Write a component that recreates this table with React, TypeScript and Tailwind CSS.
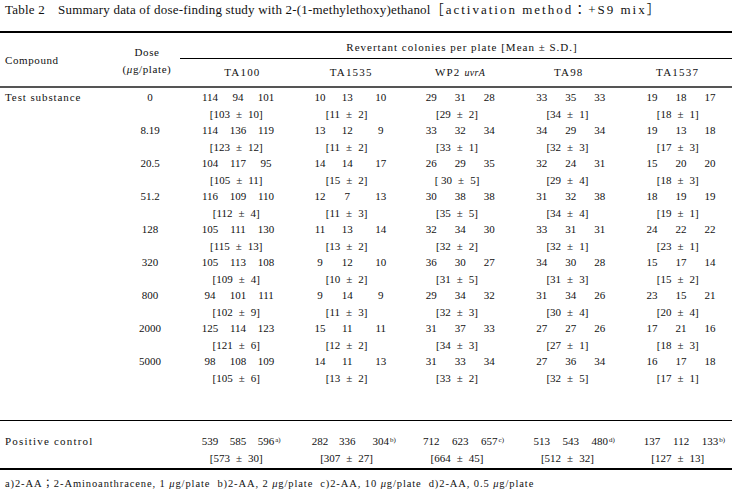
import React from 'react';

type Cell = { v: string[]; sup?: string; mean: string };

const doses = ['0', '8.19', '20.5', '51.2', '128', '320', '800', '2000', '5000'];

const strains = ['TA100', 'TA1535', 'WP2', 'TA98', 'TA1537'];

// widths of the three number slots per strain column
const slotWidths = [
  ['w-[28px]', 'w-[28px]', 'w-[28px]'],
  ['w-[30px]', 'w-[30px]', 'w-[44px]'],
  ['w-[29px]', 'w-[29px]', 'w-[29px]'],
  ['w-[29px]', 'w-[29px]', 'w-[29px]'],
  ['w-[29px]', 'w-[29px]', 'w-[29px]'],
];

const c = (a: string, b: string, d: string, mean: string, sup?: string): Cell => ({ v: [a, b, d], mean, sup });

const rows: Cell[][] = [
  [c('114', '94', '101', '[103 ± 10]'), c('10', '13', '10', '[11 ± 2]'), c('29', '31', '28', '[29 ± 2]'), c('33', '35', '33', '[34 ± 1]'), c('19', '18', '17', '[18 ± 1]')],
  [c('114', '136', '119', '[123 ± 12]'), c('13', '12', '9', '[11 ± 2]'), c('33', '32', '34', '[33 ± 1]'), c('34', '29', '34', '[32 ± 3]'), c('19', '13', '18', '[17 ± 3]')],
  [c('104', '117', '95', '[105 ± 11]'), c('14', '14', '17', '[15 ± 2]'), c('26', '29', '35', '[ 30 ± 5]'), c('32', '24', '31', '[29 ± 4]'), c('15', '20', '20', '[18 ± 3]')],
  [c('116', '109', '110', '[112 ± 4]'), c('12', '7', '13', '[11 ± 3]'), c('30', '38', '38', '[35 ± 5]'), c('31', '32', '38', '[34 ± 4]'), c('18', '19', '19', '[19 ± 1]')],
  [c('105', '111', '130', '[115 ± 13]'), c('11', '13', '14', '[13 ± 2]'), c('32', '34', '30', '[32 ± 2]'), c('33', '31', '31', '[32 ± 1]'), c('24', '22', '22', '[23 ± 1]')],
  [c('105', '113', '108', '[109 ± 4]'), c('9', '12', '10', '[10 ± 2]'), c('36', '30', '27', '[31 ± 5]'), c('34', '30', '28', '[31 ± 3]'), c('15', '17', '14', '[15 ± 2]')],
  [c('94', '101', '111', '[102 ± 9]'), c('9', '14', '9', '[11 ± 3]'), c('29', '34', '32', '[32 ± 3]'), c('31', '34', '26', '[30 ± 4]'), c('23', '15', '21', '[20 ± 4]')],
  [c('125', '114', '123', '[121 ± 6]'), c('15', '11', '11', '[12 ± 2]'), c('31', '37', '33', '[34 ± 3]'), c('27', '27', '26', '[27 ± 1]'), c('17', '21', '16', '[18 ± 3]')],
  [c('98', '108', '109', '[105 ± 6]'), c('14', '11', '13', '[13 ± 2]'), c('31', '33', '34', '[33 ± 2]'), c('27', '36', '34', '[32 ± 5]'), c('16', '17', '18', '[17 ± 1]')],
];

const positive: Cell[] = [
  c('539', '585', '596', '[573 ± 30]', 'a)'),
  c('282', '336', '304', '[307 ± 27]', 'b)'),
  c('712', '623', '657', '[664 ± 45]', 'c)'),
  c('513', '543', '480', '[512 ± 32]', 'd)'),
  c('137', '112', '133', '[127 ± 13]', 'b)'),
];

const StrainCell = ({ cell, col }: { cell: Cell; col: number }) => {
  const [l, r] = cell.mean.slice(1, -1).split('±');
  return (
    <div className="flex flex-col">
      <div className="flex pl-[16px]">
        {cell.v.map((n, i) => (
          <span key={i} className={`${slotWidths[col][i]} text-center`}>
            <span className="relative">
              {n}
              {i === 2 && cell.sup && (
                <span className="absolute left-full top-[-3px] ml-[1px] text-[7px]">{cell.sup}</span>
              )}
            </span>
          </span>
        ))}
      </div>
      <div className="whitespace-pre text-center pl-[2px]">
        [{l.replace(/ $/, '')}
        <span className="mx-[6px]">±</span>
        {r.trim()}]
      </div>
    </div>
  );
};

const grid = 'grid grid-cols-[120px_60px_repeat(5,minmax(0,1fr))]';

export default function App() {
  return (
    <div className="w-[732px] h-[493px] bg-white text-[#111] [font-family:'Liberation_Serif','Noto_Sans_CJK_JP',serif] text-[11px] leading-[16.5px] overflow-hidden">
      <div className="px-[5px] pt-[2px] text-[13px] leading-[16px] whitespace-nowrap tracking-[0.2px]">
        Table 2　Summary data of dose-finding study with 2-(1-methylethoxy)ethanol
        <span className="tracking-[2px]">［activation method：+S9 mix］</span>
      </div>

      <div className="mt-[13px] border-t-2 border-black">
        {/* header */}
        <div className={`${grid} h-[55px] border-b-2 border-[#555] tracking-[0.6px]`}>
          <div className="flex items-center pl-[5px] pt-[2px]">Compound</div>
          <div className="flex flex-col items-center justify-center pr-[6px] pt-[2px]">
            <span>Dose</span>
            <span>(<i>μ</i>g/plate)</span>
          </div>
          <div className="col-span-5 flex flex-col">
            <div className="h-[26px] border-b border-black flex items-end justify-center pb-[3px] tracking-[1px] pl-[12px]">
              Revertant colonies per plate [Mean ± S.D.]
            </div>
            <div className="grid grid-cols-5 flex-1 items-center pl-[8px]">
              {strains.map((s) => (
                <div key={s} className="text-center tracking-[1.2px]">
                  {s === 'WP2' ? (
                    <>
                      WP2 <i className="text-[10px] tracking-[0.3px]">uvrA</i>
                    </>
                  ) : (
                    s
                  )}
                </div>
              ))}
            </div>
          </div>
        </div>

        {/* data */}
        <div className="pt-[1px] pb-[34px]">
          {rows.map((r, i) => (
            <div key={i} className={grid}>
              <div className="pl-[5px] tracking-[0.9px]">{i === 0 ? 'Test substance' : ''}</div>
              <div className="text-center">{doses[i]}</div>
              {r.map((cell, j) => (
                <StrainCell key={j} cell={cell} col={j} />
              ))}
            </div>
          ))}
        </div>

        <div className={`${grid} border-t border-black pt-[12px] pb-[2px] border-b-2 border-b-black`}>
          <div className="pl-[5px] col-span-2 tracking-[1.2px]">Positive control</div>
          {positive.map((cell, j) => (
            <StrainCell key={j} cell={cell} col={j} />
          ))}
        </div>

        <div className="px-[5px] pt-[6px] text-[10.5px] whitespace-pre tracking-[0.9px]">
          a)2-AA；2-Aminoanthracene, 1 <i>μ</i>g/plate  b)2-AA, 2 <i>μ</i>g/plate  c)2-AA, 10 <i>μ</i>g/plate  d)2-AA, 0.5 <i>μ</i>g/plate
        </div>
      </div>
    </div>
  );
}
